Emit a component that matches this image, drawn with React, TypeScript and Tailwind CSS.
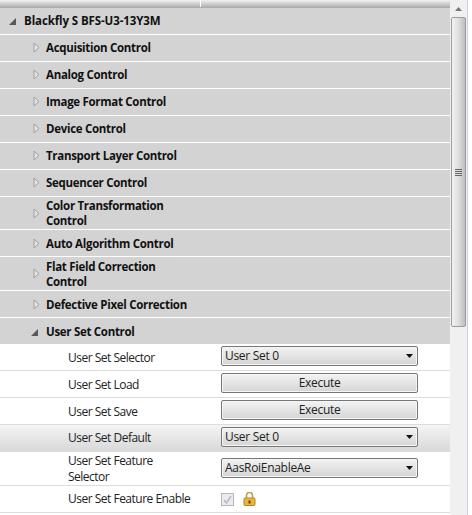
import React from "react";

const groups = [
  { label: "Acquisition Control", h: "h-[27px] pb-[2px]" },
  { label: "Analog Control", h: "h-[27px] pb-[2px]" },
  { label: "Image Format Control", h: "h-[27px] pb-[2px]" },
  { label: "Device Control", h: "h-[27px] pb-[2px]" },
  { label: "Transport Layer Control", h: "h-[27px] pb-[2px]" },
  { label: "Sequencer Control", h: "h-[27px] pb-[2px]" },
  { label: "Color Transformation Control", h: "h-[33px]" },
  { label: "Auto Algorithm Control", h: "h-[27px]" },
  { label: "Flat Field Correction Control", h: "h-[34px]" },
  { label: "Defective Pixel Correction", h: "h-[27px]" },
];

const Collapsed = () => (
  <svg width="7" height="11" viewBox="0 0 7 11" className="shrink-0">
    <path d="M1 1 L6 5.5 L1 10 Z" fill="#e2e2e2" stroke="#a0a0a0" />
  </svg>
);

const Expanded = () => (
  <svg width="9" height="9" viewBox="0 0 9 9" className="shrink-0">
    <path d="M8 1 L8 8 L1 8 Z" fill="#595959" />
  </svg>
);

const Arrow = () => (
  <svg width="8" height="4" viewBox="0 0 8 4" className="absolute right-[3px] top-[7px]">
    <path d="M0 0 L7 0 L3.5 4 Z" fill="#111" />
  </svg>
);

const Combo = ({ value }: { value: string }) => (
  <div className="relative mb-[2px] flex h-[20px] w-[197px] items-center rounded-[2px] border border-[#777] bg-gradient-to-b from-[#f3f3f3] to-[#d5d5d5] pl-[3px] tracking-[-0.3px] text-[#222] shadow-[inset_0_0_0_1px_#f6f6f6]">
    {value}
    <Arrow />
  </div>
);

const Execute = () => (
  <div className="mb-[2px] flex h-[20px] w-[197px] items-center justify-center rounded-[2px] border border-[#777] bg-gradient-to-b from-[#f3f3f3] to-[#d5d5d5] tracking-[-0.3px] text-[#222] shadow-[inset_0_0_0_1px_#f6f6f6]">
    Execute
  </div>
);

const Row = ({
  label,
  h,
  active,
  low,
  children,
}: {
  label: string;
  h: string;
  active?: boolean;
  low?: boolean;
  children: React.ReactNode;
}) => (
  <div
    className={`flex items-center border-b border-[#dcdcdc] ${h} ${
      active ? "bg-gradient-to-b from-[#f4f4f4] to-[#d9d9d9]" : "bg-white"
    }`}
  >
    <div
      className={`w-[221px] shrink-0 pl-[68px] pr-[27px] leading-[16px] tracking-[-0.5px] text-[#222] ${
        low ? "pt-[2px]" : ""
      }`}
    >
      {label}
    </div>
    {children}
  </div>
);

const Lock = () => (
  <svg width="13" height="14" viewBox="0 0 13 14" className="ml-[9px]">
    <path d="M3.5 6 V3.5 a3 3 0 0 1 6 0 V6" fill="none" stroke="#b9a24a" strokeWidth="1.6" />
    <rect x="1" y="6" width="11" height="7.5" rx="1" fill="#e8b63c" stroke="#b5862a" />
    <rect x="5.5" y="8.5" width="2" height="3" fill="#5c4310" />
  </svg>
);

export default function App() {
  return (
    <div
      className="flex h-[515px] w-[472px] overflow-hidden bg-white text-[12px]"
      style={{ fontFamily: '"Open Sans", "Noto Sans", sans-serif' }}
    >
      <div className="w-[450px] shrink-0">
        <div className="relative h-[8px] bg-gradient-to-b from-[#f2f2f2] to-[#a9a9a9]">
          <div className="absolute left-[200px] top-0 h-[7px] w-px bg-white" />
        </div>
        <div className="flex h-[27px] items-center gap-[7px] border-b border-white bg-[#d3d3d3] pl-[8px] text-[11.5px] font-bold tracking-[-0.1px] text-[#111]">
          <Expanded />
          <span>Blackfly S BFS-U3-13Y3M</span>
        </div>
        {groups.map((g) => (
          <div
            key={g.label}
            className={`flex items-center gap-[6px] border-b border-white bg-[#d3d3d3] pl-[33px] text-[11.5px] font-bold leading-[15px] tracking-[-0.3px] text-[#111] ${g.h}`}
          >
            <Collapsed />
            <span className="w-[146px]">{g.label}</span>
          </div>
        ))}
        <div className="flex h-[26px] items-center gap-[7px] bg-[#d3d3d3] pl-[30px] pt-[2px] text-[11.5px] font-bold tracking-[-0.3px] text-[#111]">
          <Expanded />
          <span>User Set Control</span>
        </div>
        <Row label="User Set Selector" h="h-[27px]" low>
          <Combo value="User Set 0" />
        </Row>
        <Row label="User Set Load" h="h-[27px]" low>
          <Execute />
        </Row>
        <Row label="User Set Save" h="h-[27px]" low>
          <Execute />
        </Row>
        <Row label="User Set Default" h="h-[27px]" active>
          <Combo value="User Set 0" />
        </Row>
        <Row label="User Set Feature Selector" h="h-[34px]">
          <Combo value="AasRoiEnableAe" />
        </Row>
        <Row label="User Set Feature Enable" h="h-[27px]">
          <div className="flex h-[13px] w-[13px] items-center justify-center border border-[#b5b5b5] bg-[#ececec]">
            <svg width="9" height="9" viewBox="0 0 9 9">
              <path d="M1 5 L3.5 8 L8 1" fill="none" stroke="#b4bccb" strokeWidth="1.6" />
            </svg>
          </div>
          <Lock />
        </Row>
      </div>
      <div className="flex h-full w-[18px] shrink-0 flex-col items-center border-r border-[#c9d6e2] bg-[#f0f0f0]">
        <div className="flex h-[17px] items-center justify-center">
          <svg width="7" height="4" viewBox="0 0 7 4">
            <path d="M3.5 0 L7 4 L0 4 Z" fill="#777" />
          </svg>
        </div>
        <div className="flex h-[310px] w-[15px] flex-col items-center justify-center rounded-[2px] border border-[#9c9c9c] bg-gradient-to-r from-[#f2f2f2] via-[#dedede] to-[#bdbdbd]">
          <div className="flex w-[7px] flex-col gap-px">
            <div className="h-px bg-[#666]" />
            <div className="h-px bg-[#666]" />
            <div className="h-px bg-[#666]" />
            <div className="h-px bg-[#666]" />
          </div>
        </div>
      </div>
    </div>
  );
}
